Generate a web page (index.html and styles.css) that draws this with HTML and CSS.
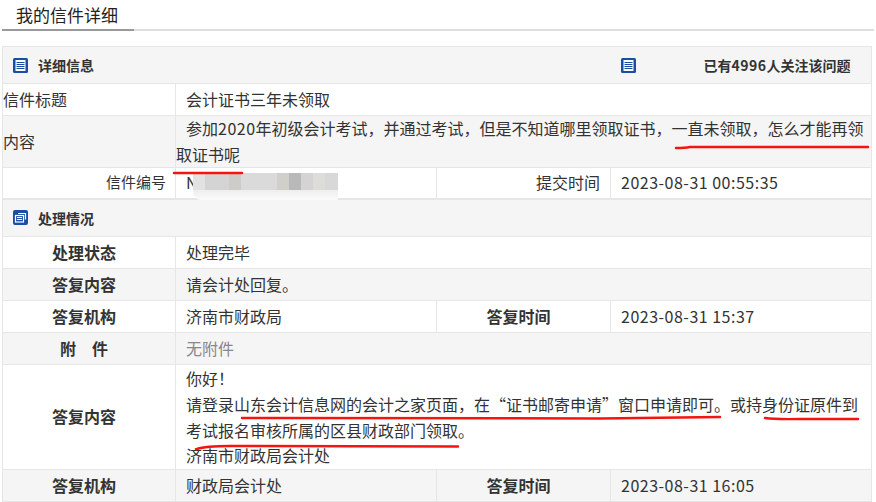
FILE: index.html
```html
<!DOCTYPE html>
<html lang="zh-CN">
<head>
<meta charset="utf-8">
<title>我的信件详细</title>
<link rel="stylesheet" href="styles.css">
</head>
<body>
<div class="tabs"><div class="tab">我的信件详细</div></div>
<div class="sheet">
<table class="detail">
<colgroup><col class="c1"><col class="c2"><col class="c3"><col class="c4"></colgroup>
<tr class="head r1">
  <td colspan="3" class="open-r"><div class="sect"><svg class="ico" viewBox="0 0 15 15"><rect width="15" height="15" rx="1.5" fill="#1b4ea3"/><rect x="2.5" y="2" width="10" height="11" fill="#fff"/><path d="M3.5 4.500h8M3.500 6.500h8M3.500 8.500h8M3.500 10.500h8" stroke="#1b4ea3" stroke-width="1"/></svg>详细信息</div></td>
  <td class="open-l"><div class="sect split"><svg class="ico" viewBox="0 0 15 15"><rect width="15" height="15" rx="1.5" fill="#1b4ea3"/><rect x="2.5" y="2" width="10" height="11" fill="#fff"/><path d="M3.5 4.500h8M3.500 6.500h8M3.500 8.500h8M3.500 10.500h8" stroke="#1b4ea3" stroke-width="1"/></svg><span>已有<span class="num">4996</span>人关注该问题</span></div></td>
</tr>
<tr class="r2"><td class="tag">信件标题</td><td colspan="3" class="val">会计证书三年未领取</td></tr>
<tr class="alt r3"><td class="tag">内容</td><td colspan="3" class="para">参加<span class="num">2020</span>年初级会计考试，并通过考试，但是不知道哪里领取证书，一直未领取，怎么才能再领<br>取证书呢</td></tr>
<tr class="r4 thick"><td class="right small">信件编号</td><td class="val">N</td><td class="right">提交时间</td><td class="val"><span class="num">2023-08-31 00:55:35</span></td></tr>
<tr class="head r5">
  <td colspan="4"><div class="sect"><svg class="ico" viewBox="0 0 15 15"><rect width="15" height="15" rx="2" fill="#1b4ea3"/><path d="M5 3.500h7.500v6" fill="none" stroke="#fff" stroke-width="1.200"/><rect x="2.500" y="5.500" width="8" height="6.500" fill="#1b4ea3" stroke="#fff" stroke-width="1.200"/><path d="M4 7.500h5M4 9.500h5" stroke="#fff" stroke-width="1"/></svg>处理情况</div></td>
</tr>
<tr class="r6"><th>处理状态</th><td colspan="3" class="val">处理完毕</td></tr>
<tr class="alt r6"><th>答复内容</th><td colspan="3" class="val">请会计处回复。</td></tr>
<tr class="r6"><th>答复机构</th><td class="val">济南市财政局</td><th>答复时间</th><td class="val"><span class="num">2023-08-31 15:37</span></td></tr>
<tr class="alt r6"><th>附　件</th><td colspan="3" class="val none">无附件</td></tr>
<tr class="r7"><th>答复内容</th><td colspan="3" class="val">你好！<br>请登录山东会计信息网的会计之家页面，在“证书邮寄申请”窗口申请即可。或持身份证原件到考试报名审核所属的区县财政部门领取。<br>济南市财政局会计处</td></tr>
<tr class="alt r8"><th>答复机构</th><td class="val">财政局会计处</td><th>答复时间</th><td class="val"><span class="num">2023-08-31 16:05</span></td></tr>
</table>
<div class="mosaic"><div class="m1"></div><div class="m2"></div></div>
<svg class="marks" viewBox="0 0 876 502" width="876" height="502" aria-hidden="true">
  <path d="M676 148Q685 148 690 147L868 147"/>
  <path d="M174 173L242 173"/>
  <path d="M242 418L600 418.500L720 417"/>
  <path d="M765 418Q775 419.500 800 419L858 419"/>
  <path d="M197 449Q205 446 230 446L458 446.500"/>
</svg>
</div>
</body>
</html>
```
FILE: styles.css
```css
* { box-sizing: border-box; }
html, body { margin: 0; padding: 0; background: #fff; }
body {
  width: 876px;
  height: 502px;
  overflow: hidden;
  font-family: "Noto Sans CJK SC", "Noto Sans", sans-serif;
  font-size: 16px;
  color: #333;
}
.tabs {
  margin: 0 2px 0 2px;
  height: 31px;
  border-bottom: 2px solid #dedede;
}
.tab {
  width: 132px;
  height: 31px;
  padding-left: 14px;
  font-size: 17px;
  line-height: 29px;
  color: #222;
  border-bottom: 2px solid #999;
}
.sheet { padding: 15px 0 0 2px; }
.detail {
  width: 869px;
  table-layout: fixed;
  border-collapse: collapse;
  border: 1px solid #e6e6e6;
}
.c1 { width: 173px; }
.c2 { width: 261px; }
.c3 { width: 174px; }
.c4 { width: 261px; }
.detail td, .detail th {
  border: 1px solid #e6e6e6;
  padding: 0 0 2px;
  line-height: 26px;
  font-weight: 400;
}
.detail th { text-align: center; font-weight: 700; padding-right: 10px; }
.r1 { height: 37px; }
.r2 { height: 32px; }
.r3 { height: 51px; }
.r4 { height: 31px; }
.r5 { height: 38px; }
.r6 { height: 32px; }
.r7 { height: 105px; }
.r8 { height: 32px; }
.thick td { border-bottom-width: 2px; }
.head td { background: #f5f5f5; padding-bottom: 0; }
.alt td, .alt th { background: #f5f5f5; }
.detail .open-r { border-right: 0; }
.detail .open-l { border-left: 0; }
.sect {
  display: flex;
  align-items: center;
  gap: 10px;
  padding-left: 10px;
  font-size: 14px;
  font-weight: 700;
}
.split { gap: 68px; padding-left: 10px; }
.ico { width: 15px; height: 15px; flex: none; }
.num { letter-spacing: 0.5px; }
.detail .tag { padding-left: 0; }
.detail .right { text-align: right; padding-right: 10px; }
.detail .small { font-size: 15px; padding-right: 9px; }
.detail .val { padding-left: 10px; }
.r7 .val { padding-top: 1px; padding-bottom: 0; line-height: 25.750px; }
.detail .para { padding: 0; text-indent: 10px; line-height: 25.500px; }
.detail .none { color: #888; }
.mosaic {
  position: absolute;
  left: 193px;
  top: 173px;
  width: 145px;
  height: 27px;
}
.m1 {
  height: 17px;
  background: linear-gradient(90deg, #e2e2e2 0 12px, #d4d4d4 12px 36px, #cdccc8 36px 48px, #dadada 48px 84px, #d0cfca 84px 96px, #b9b9b9 96px 108px, #d4d4d4 108px 120px, #dddcd8 120px 132px, #d8d8d8 132px 145px);
}
.m2 {
  height: 10px;
  border-bottom-left-radius: 8px;
  background: linear-gradient(180deg, #eeeeee, #fbfbfb);
}
.marks {
  position: absolute;
  left: 0;
  top: 0;
  pointer-events: none;
}
.marks path {
  fill: none;
  stroke: #f5140f;
  stroke-width: 2.500;
  stroke-linecap: round;
}
```
